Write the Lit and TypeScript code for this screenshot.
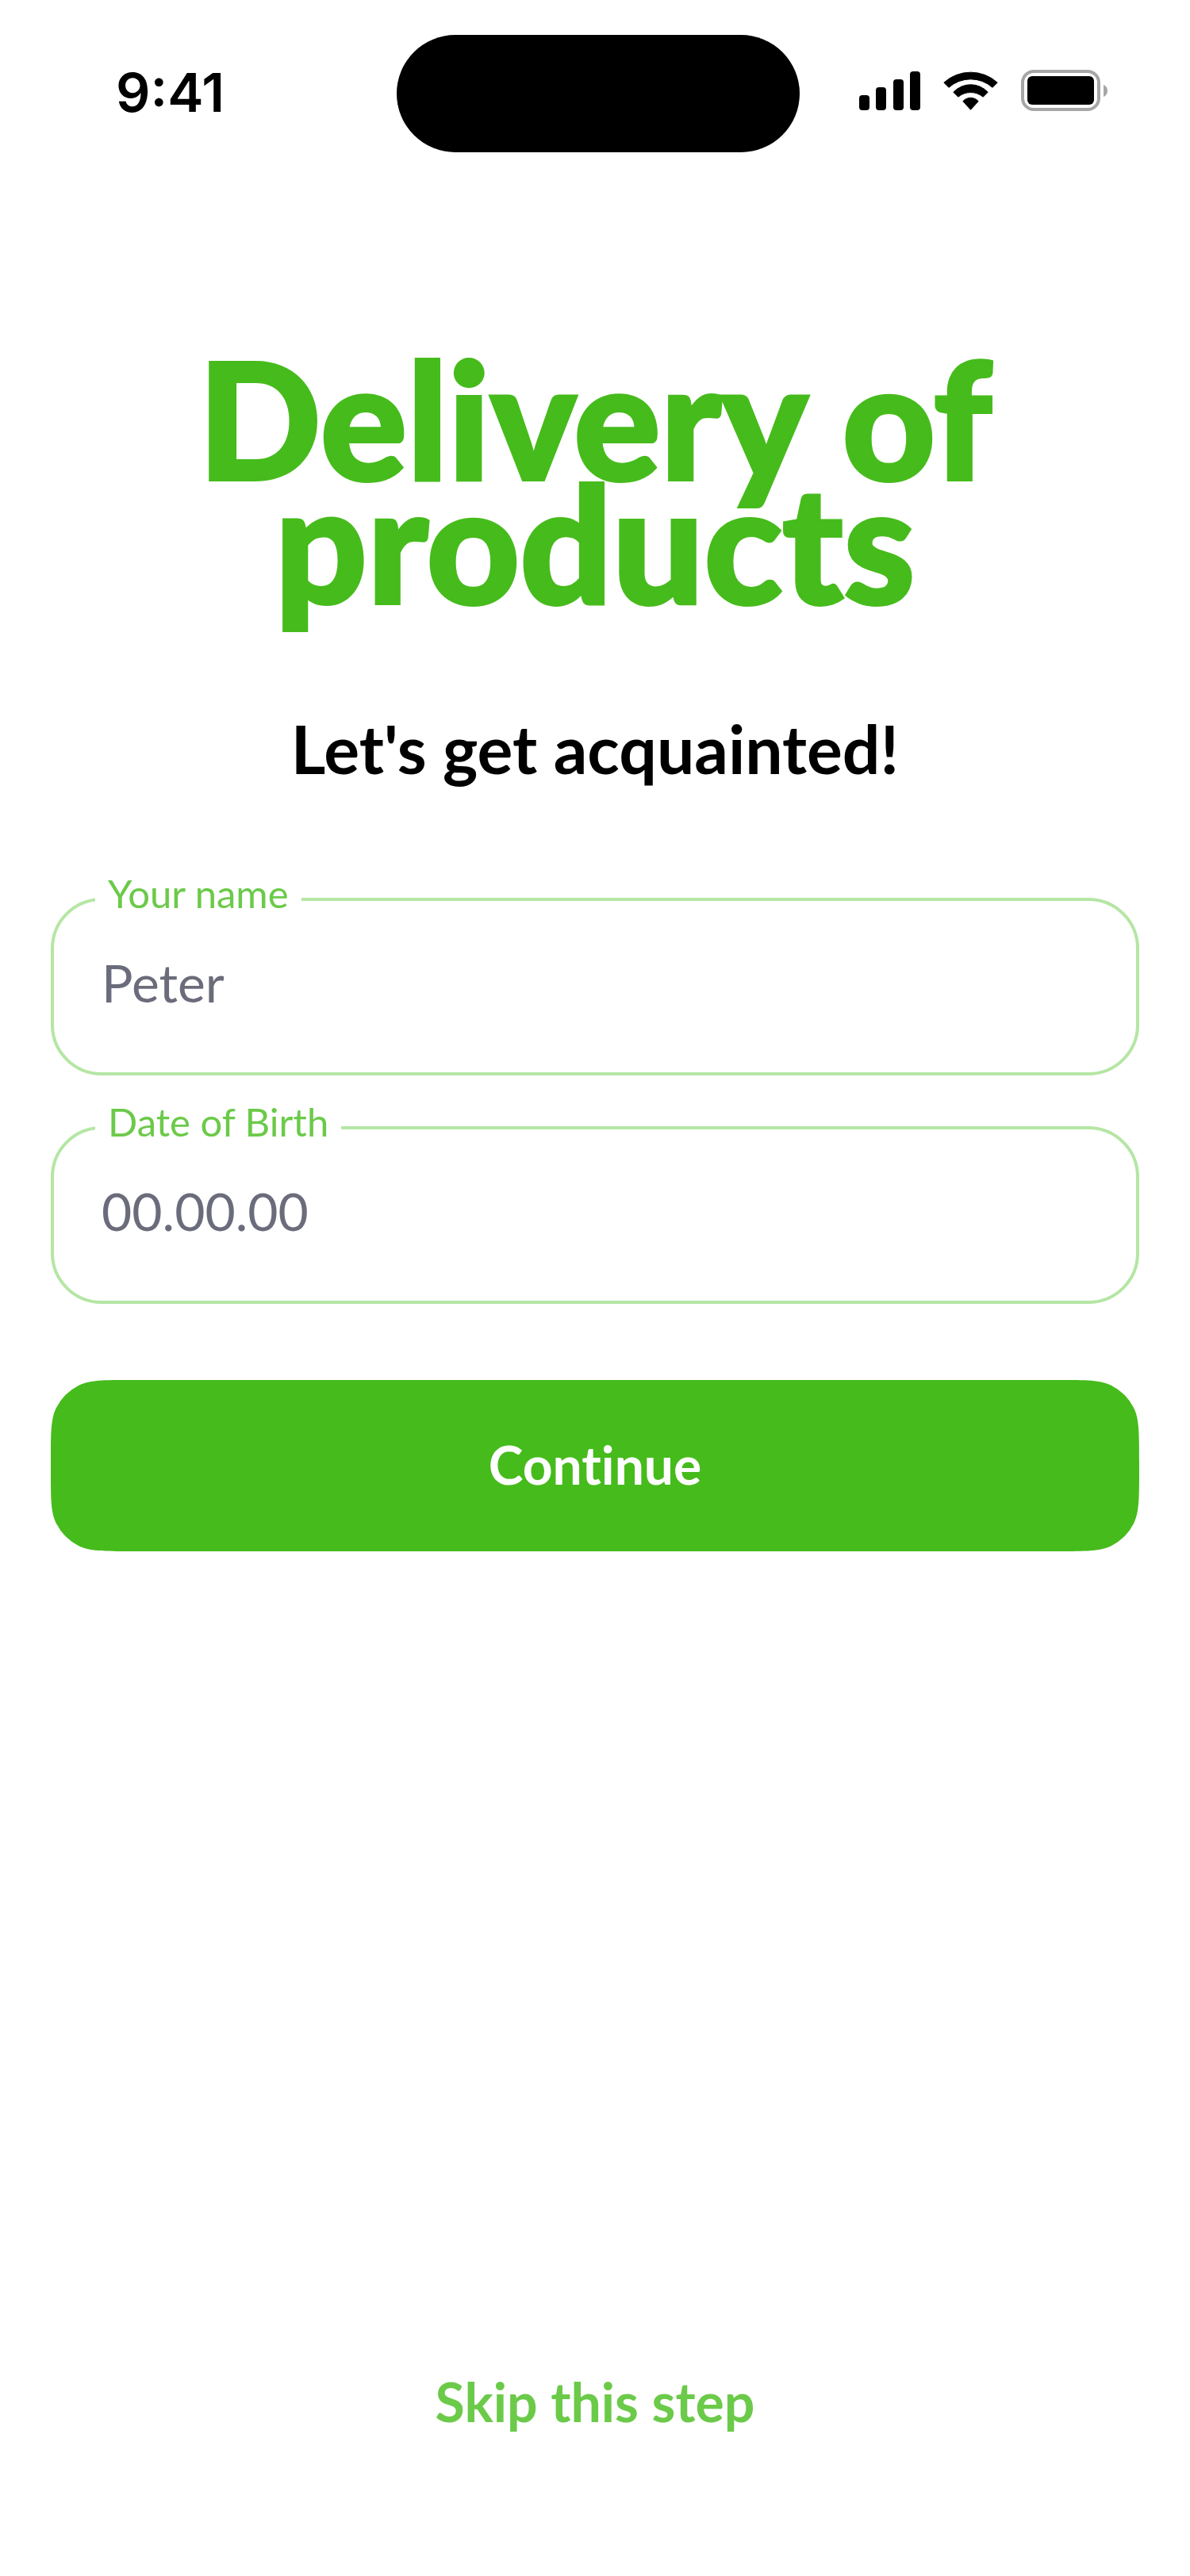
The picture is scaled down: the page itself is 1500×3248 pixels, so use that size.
import { LitElement, html, css, svg } from "lit";
import { customElement, property } from "lit/decorators.js";

@customElement("status-bar")
export class StatusBar extends LitElement {
  static styles = css`
    :host {
      display: grid;
      grid-template-columns: 1fr auto 1fr;
      align-items: center;
      padding: 44px 0 0 8px;
      color: #000;
    }
    .time {
      padding: 0 0 4px 138px;
      font: 600 68px/80px Inter, "Liberation Sans", sans-serif;
    }
    .island {
      width: 508px;
      height: 148px;
      border-radius: 74px;
      background: #000;
    }
    .icons {
      display: flex;
      justify-content: flex-end;
      align-items: center;
      gap: 29px;
      padding: 0 104px 8px 0;
    }
    svg {
      display: block;
    }
  `;

  render() {
    const bars = [
      [0, 30],
      [21, 20],
      [43, 10],
      [64, 0],
    ];
    return html`
      <time class="time">9:41</time>
      <div class="island"></div>
      <div class="icons">
        <svg width="77" height="49" viewBox="0 0 77 49" role="img" aria-label="Signal">
          ${bars.map(
            ([x, y]) => svg`<rect x=${x} y=${y} width="13" height=${49 - y} rx="4" />`
          )}
        </svg>
        <svg width="69" height="49" viewBox="0 0 69 49" role="img" aria-label="Wi-Fi">
          <g stroke="#000" stroke-width="1" stroke-linejoin="round">
            <path d="M.8 14.200A50 50 0 0 1 68.200 14.200L62 20.300A41.300 41.300 0 0 0 7 20.300z" />
            <path d="M12.800 26.200A29.600 29.600 0 0 1 56.200 26.200L50.200 32.200A24.700 24.700 0 0 0 18.800 32.200z" />
            <path d="M24.800 37.700A13 13 0 0 1 44.200 37.700L34.500 48.300z" />
          </g>
        </svg>
        <svg width="109" height="52" viewBox="0 0 109 52" role="img" aria-label="Battery">
          <rect x="2" y="2" width="96" height="48" rx="14" fill="none" stroke="#a6a6a6" stroke-width="4" />
          <rect x="8" y="8" width="84" height="36" rx="6" />
          <path d="M104 19c3 1 5 4 5 7.500s-2 6.500-5 7.500z" fill="#a6a6a6" />
        </svg>
      </div>
    `;
  }
}

@customElement("text-field")
export class TextField extends LitElement {
  @property() label = "";
  @property() hint = "";

  static styles = css`
    :host {
      display: block;
      position: relative;
    }
    .caption {
      position: absolute;
      top: -34px;
      left: 56px;
      padding: 0 16px;
      background: #fff;
      color: #6bca49;
      font-size: 49px;
      line-height: 56px;
    }
    .input {
      display: block;
      box-sizing: border-box;
      width: 100%;
      height: 224px;
      margin: 0;
      padding: 0 60px 12px;
      border: 4px solid #b5e6a4;
      border-radius: 64px;
      background: none;
      color: #6b6c7b;
      font: inherit;
      font-size: 66px;
      outline: none;
    }
    .input::placeholder {
      color: #6b6c7b;
      opacity: 1;
    }
    .input:focus {
      border-color: #46bb1c;
    }
  `;

  render() {
    return html`
      <input class="input" id="field" type="text" placeholder=${this.hint} />
      <label class="caption" for="field">${this.label}</label>
    `;
  }
}

@customElement("app-root")
export class AppRoot extends LitElement {
  static styles = css`
    :host {
      display: flex;
      flex-direction: column;
      box-sizing: border-box;
      min-height: 100vh;
      background: #fff;
      font-family: Lato, "Open Sans", sans-serif;
      font-variant-ligatures: none;
    }
    .page {
      flex: 1;
      display: flex;
      flex-direction: column;
      padding: 256px 64px 176px;
    }
    .title {
      margin: 0 auto;
      max-width: 1100px;
      color: #46bb1c;
      font-size: 204px;
      font-weight: 900;
      line-height: 156px;
      text-align: center;
      -webkit-text-stroke: 4px #46bb1c;
      stroke-linejoin: round;
    }
    .subtitle {
      margin: 124px 0 0;
      color: #000;
      font-size: 84px;
      font-weight: 700;
      line-height: 120px;
      text-align: center;
    }
    .form {
      display: flex;
      flex-direction: column;
      gap: 64px;
      margin-top: 128px;
    }
    .continue {
      height: 216px;
      margin: 32px 0 0;
      padding: 0 0 4px;
      border: 1px solid transparent;
      border-image: url("data:image/svg+xml,%3Csvg xmlns='http://www.w3.org/2000/svg' width='216' height='216'%3E%3Cpath fill='%2346bb1c' d='M102.400 0H113.600c35.840 0 53.760 0 67.450 6.975a64 64 0 0 1 27.970 27.970c6.975 13.690 6.975 31.610 6.975 67.450V113.600c0 35.840 0 53.760-6.975 67.450a64 64 0 0 1-27.970 27.970c-13.690 6.975-31.610 6.975-67.450 6.975H102.400c-35.840 0-53.760 0-67.450-6.975a64 64 0 0 1-27.970-27.970c-6.975-13.690-6.975-31.610-6.975-67.450V102.400c0-35.840 0-53.760 6.975-67.450a64 64 0 0 1 27.970-27.970c13.690-6.975 31.610-6.975 67.450-6.975z'/%3E%3C/svg%3E") 104 fill / 104px stretch;
      background: none;
      color: #fff;
      font: inherit;
      font-variant-ligatures: none;
      font-size: 66px;
      font-weight: 700;
      cursor: pointer;
    }
    .skip {
      align-self: center;
      margin-top: auto;
      color: #6bca49;
      font-size: 68px;
      font-weight: 700;
      line-height: 88px;
      text-decoration: none;
    }
  `;

  render() {
    return html`
      <status-bar></status-bar>
      <main class="page">
        <h1 class="title">Delivery of products</h1>
        <p class="subtitle">Let's get acquainted!</p>
        <form class="form" @submit=${(e: Event) => e.preventDefault()}>
          <text-field label="Your name" hint="Peter"></text-field>
          <text-field label="Date of Birth" hint="00.00.00"></text-field>
          <button class="continue" type="submit">Continue</button>
        </form>
        <a class="skip" href="#skip">Skip this step</a>
      </main>
    `;
  }
}
